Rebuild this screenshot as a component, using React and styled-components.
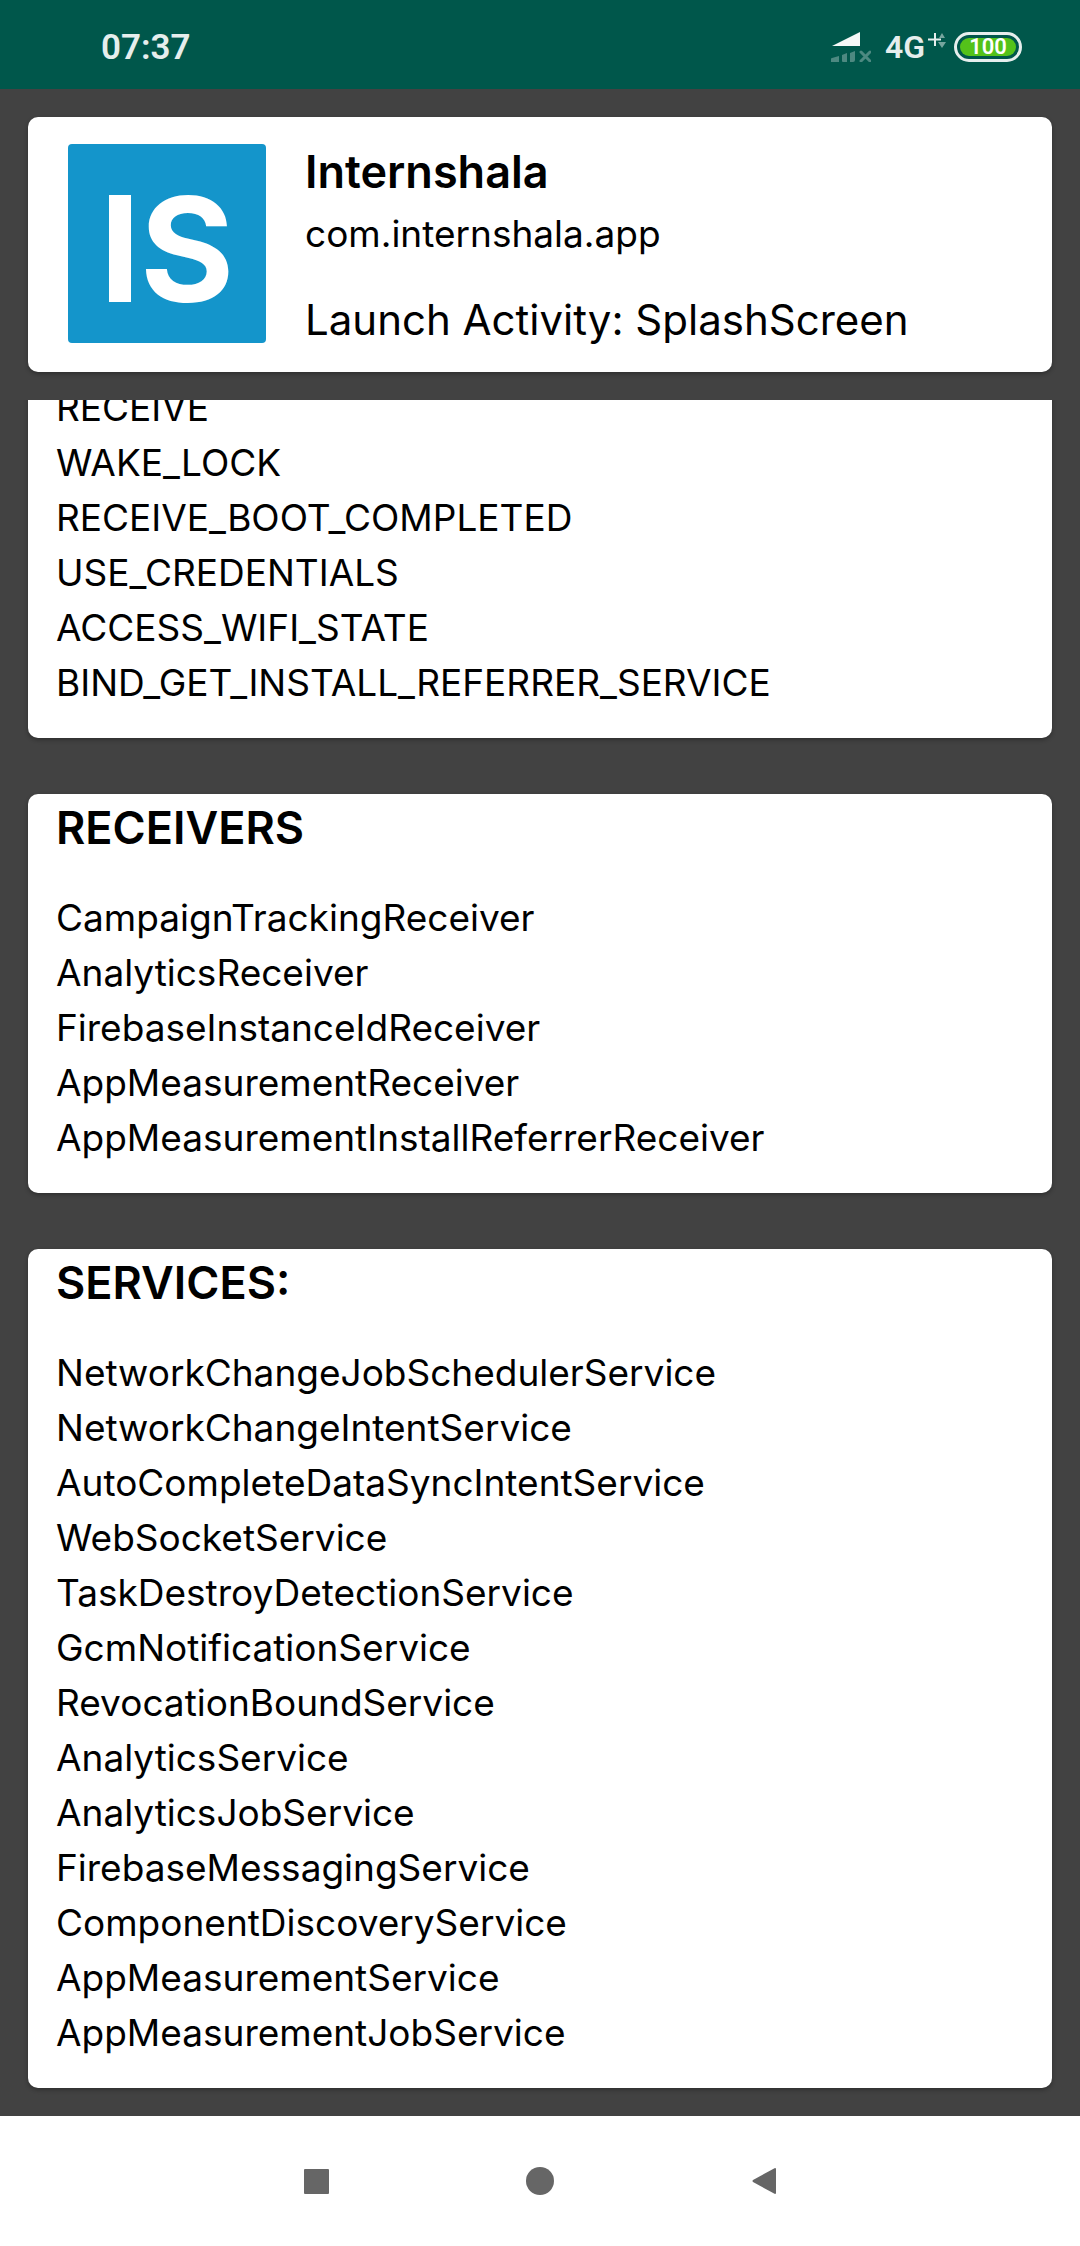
import React from "react";
import styled, { createGlobalStyle } from "styled-components";

const GlobalStyle = createGlobalStyle`
  *, *::before, *::after { box-sizing: border-box; }
  body { margin: 0; background: #424242; }
`;

const Screen = styled.div`
  display: flex;
  flex-direction: column;
  height: 100vh;
  background: #424242;
  color: #000;
  font-family: Inter, "Liberation Sans", sans-serif;
`;

const StatusBar = styled.header`
  flex: none;
  display: flex;
  align-items: center;
  justify-content: space-between;
  height: 89px;
  padding: 5px 58px 0 101px;
  background: #00574b;
  color: #e6eeed;
  font-family: Roboto, sans-serif;
`;

const Clock = styled.time`
  padding-top: 2px;
  font-size: 35px;
  line-height: 40px;
  font-weight: 600;
`;

const StatusIcons = styled.div`
  display: flex;
  align-items: center;
`;

const Network = styled.span`
  margin-left: 14px;
  font-size: 32px;
  line-height: 40px;
  font-weight: 600;
`;

const DataIcon = styled.svg`
  display: block;
  margin: 0 8px 12px 3px;
`;

const Battery = styled.div`
  display: grid;
  width: 68px;
  height: 30px;
  padding: 3px;
  border: 3px solid #e6eeed;
  border-radius: 15px;
`;

const BatteryLevel = styled.span`
  display: grid;
  place-items: center;
  border-radius: 9px;
  background: #54c21a;
  color: #fff;
  font-size: 22px;
  line-height: 18px;
  font-weight: 600;
`;

const Main = styled.main`
  flex: 1;
  display: flex;
  flex-direction: column;
  gap: 28px;
  min-height: 0;
  padding-top: 28px;
`;

const Card = styled.section`
  flex: none;
  margin: 0 28px;
  border-radius: 10px;
  background: #fff;
  box-shadow: 0 2px 4px rgba(0, 0, 0, 0.3);
`;

const AppCard = styled(Card)`
  display: flex;
  gap: 39px;
  padding: 27px 40px 29px;
`;

const Logo = styled.svg`
  flex: none;
  display: block;
  width: 198px;
  height: 199px;
`;

const AppInfo = styled.div`
  display: flex;
  flex-direction: column;
`;

const AppName = styled.h1`
  margin: 0;
  font-size: 45px;
  line-height: 56px;
  font-weight: 600;
`;

const PackageName = styled.p`
  margin: 6px 0 0;
  font-size: 37px;
  line-height: 56px;
`;

const LaunchActivity = styled.p`
  margin: 34px 0 0;
  font-size: 42px;
  line-height: 47px;
`;

const Scroller = styled.div`
  flex: 1;
  display: flex;
  flex-direction: column;
  justify-content: flex-end;
  gap: 56px;
  min-height: 0;
  padding-bottom: 28px;
  overflow: hidden;
`;

const ListCard = styled(Card)`
  padding: ${(p) => (p.$untitled ? "8px" : "0")} 28px 28px;
`;

const Heading = styled.h2`
  margin: 0 0 28px;
  font-size: 45px;
  line-height: 68px;
  font-weight: 600;
`;

const List = styled.ul`
  margin: 0;
  padding: 0;
  list-style: none;
`;

const Item = styled.li`
  font-size: 37px;
  line-height: 55px;
`;

const NavBar = styled.nav`
  flex: none;
  display: flex;
  justify-content: center;
  height: 130px;
  background: #fff;
`;

const NavButton = styled.button`
  display: grid;
  place-items: center;
  width: 224px;
  padding: 0;
  border: 0;
  background: none;
  color: #666;
`;

const permissions = [
  "RECEIVE",
  "WAKE_LOCK",
  "RECEIVE_BOOT_COMPLETED",
  "USE_CREDENTIALS",
  "ACCESS_WIFI_STATE",
  "BIND_GET_INSTALL_REFERRER_SERVICE",
];

const receivers = [
  "CampaignTrackingReceiver",
  "AnalyticsReceiver",
  "FirebaseInstanceIdReceiver",
  "AppMeasurementReceiver",
  "AppMeasurementInstallReferrerReceiver",
];

const services = [
  "NetworkChangeJobSchedulerService",
  "NetworkChangeIntentService",
  "AutoCompleteDataSyncIntentService",
  "WebSocketService",
  "TaskDestroyDetectionService",
  "GcmNotificationService",
  "RevocationBoundService",
  "AnalyticsService",
  "AnalyticsJobService",
  "FirebaseMessagingService",
  "ComponentDiscoveryService",
  "AppMeasurementService",
  "AppMeasurementJobService",
];

function NameList({ title, names }) {
  return (
    <ListCard $untitled={!title}>
      {title && <Heading>{title}</Heading>}
      <List>
        {names.map((name) => (
          <Item key={name}>{name}</Item>
        ))}
      </List>
    </ListCard>
  );
}

function SignalIcon() {
  return (
    <svg width="40" height="30" viewBox="0 0 40 30" aria-hidden="true">
      <path d="M1 14 29 0v14z" fill="#f5f9f8" />
      <g fill="#4d8981">
        <path d="M0 27q0-1 1-1l7-2v6H0zM11 23l5-2v9h-4q-1 0-1-1zM19 21l5-2v9q0 2-2 2h-3z" />
        <path d="m30 20 9 9m0-9-9 9" stroke="#4d8981" strokeWidth="3" strokeLinecap="round" />
      </g>
    </svg>
  );
}

export default function App() {
  return (
    <Screen>
      <GlobalStyle />
      <StatusBar>
        <Clock>07:37</Clock>
        <StatusIcons>
          <SignalIcon />
          <Network>4G</Network>
          <DataIcon width="18" height="18" viewBox="0 0 18 18" aria-hidden="true">
            <path d="M7 1v13M0 7.500h13" stroke="#e6eeed" strokeWidth="2" />
            <path d="m14 1 3 5h-6zM14 16l-4-6h8z" fill="#76a59e" />
          </DataIcon>
          <Battery>
            <BatteryLevel>100</BatteryLevel>
          </Battery>
        </StatusIcons>
      </StatusBar>

      <Main>
        <AppCard>
          <Logo viewBox="0 0 198 199" role="img" aria-label="Internshala logo">
            <rect width="198" height="199" rx="4" fill="#1495cb" />
            <rect x="41" y="51" width="22" height="107" fill="#fff" />
            <text
              x="72"
              y="157"
              fill="#fff"
              fontFamily="Inter, sans-serif"
              fontWeight="700"
              fontSize="144"
            >
              S
            </text>
          </Logo>
          <AppInfo>
            <AppName>Internshala</AppName>
            <PackageName>com.internshala.app</PackageName>
            <LaunchActivity>Launch Activity: SplashScreen</LaunchActivity>
          </AppInfo>
        </AppCard>

        <Scroller>
          <NameList names={permissions} />
          <NameList title="RECEIVERS" names={receivers} />
          <NameList title="SERVICES:" names={services} />
        </Scroller>
      </Main>

      <NavBar>
        <NavButton aria-label="Recent apps">
          <svg width="25" height="25" viewBox="0 0 25 25">
            <rect width="25" height="25" rx="1" fill="currentColor" />
          </svg>
        </NavButton>
        <NavButton aria-label="Home">
          <svg width="28" height="28" viewBox="0 0 28 28">
            <circle cx="14" cy="14" r="14" fill="currentColor" />
          </svg>
        </NavButton>
        <NavButton aria-label="Back">
          <svg width="24" height="26" viewBox="0 0 24 26">
            <path d="M23 0q1 0 1 1v24q0 1-1 1L1 14q-1-1 0-2z" fill="currentColor" />
          </svg>
        </NavButton>
      </NavBar>
    </Screen>
  );
}
